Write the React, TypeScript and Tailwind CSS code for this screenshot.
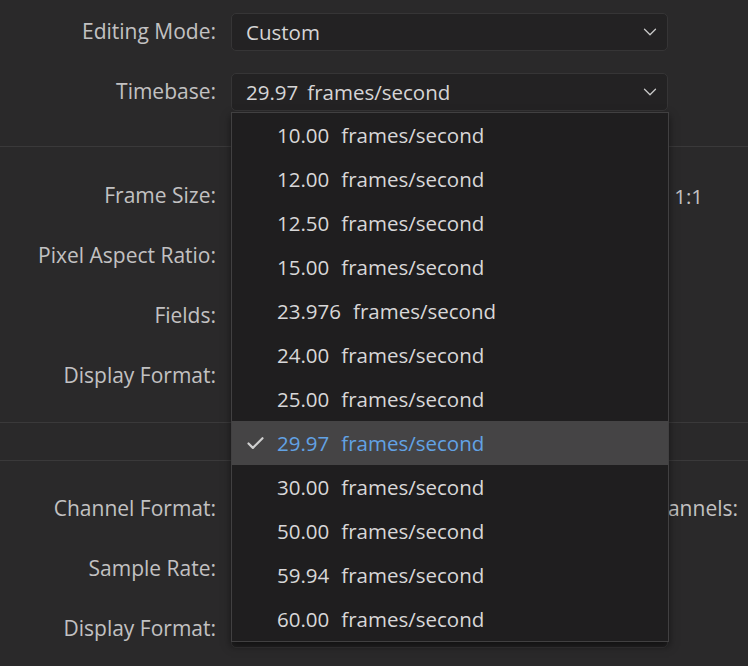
import { Check, ChevronDown } from 'lucide-react';

const rates = ['10.00', '12.00', '12.50', '15.00', '23.976', '24.00', '25.00', '29.97', '30.00', '50.00', '59.94', '60.00'];

function Label({ children }: { children: React.ReactNode }) {
  return <div className="w-[216px] shrink-0 text-right text-[21px] text-[#c2c1c2]">{children}</div>;
}

function SelectBox({ children }: { children?: React.ReactNode }) {
  return (
    <div className="ml-[15px] flex h-[38px] w-[437px] items-center justify-between rounded-[5px] border border-[#363536] bg-[#232223] pl-[14px] pr-[6px] text-[#d6d5d6]">
      <div className="flex items-center">{children}</div>
      <ChevronDown className="h-[22px] w-[22px] text-[#c8c8c8]" strokeWidth={1.4} />
    </div>
  );
}

function Row({ children }: { children: React.ReactNode }) {
  return <div className="flex h-[60px] items-center">{children}</div>;
}

export default function App() {
  return (
    <div
      className="relative h-[666px] w-[748px] overflow-hidden bg-[#2a292a] text-[20.5px]"
      style={{ fontFamily: '"Open Sans", "DejaVu Sans", sans-serif' }}
    >
      {/* sequence settings form */}
      <div className="pt-[2px]">
        <Row>
          <Label>Editing Mode:</Label>
          <SelectBox>Custom</SelectBox>
        </Row>
        <Row>
          <Label>Timebase:</Label>
          <SelectBox>
            <span>29.97</span>
            <span className="ml-[9px]">frames/second</span>
          </SelectBox>
        </Row>
      </div>

      <div className="mt-[24px] h-px bg-[#3a393a]" />

      <div className="pt-[19px]">
        <Row>
          <Label>Frame Size:</Label>
          <div className="ml-auto mr-[45px] text-[#c2c1c2]">1:1</div>
        </Row>
        <Row>
          <Label>Pixel Aspect Ratio:</Label>
        </Row>
        <Row>
          <Label>Fields:</Label>
        </Row>
        <Row>
          <Label>Display Format:</Label>
        </Row>
      </div>

      <div className="mt-[16px] h-px bg-[#3a393a]" />
      <div className="mt-[37px] h-px bg-[#3a393a]" />

      <div className="pt-[18px]">
        <Row>
          <Label>Channel Format:</Label>
          <div className="ml-auto mr-[10px] text-[21px] text-[#c2c1c2]">Channels:</div>
        </Row>
        <Row>
          <Label>Sample Rate:</Label>
        </Row>
        <Row>
          <Label>Display Format:</Label>
          <SelectBox />
        </Row>
      </div>

      {/* open timebase menu */}
      <div className="absolute left-[231px] top-[112px] w-[438px] border border-[#414041] bg-[#1f1e1f] shadow-[0_4px_8px_rgba(0,0,0,0.5)]">
        {rates.map((r) => {
          const sel = r === '29.97';
          return (
            <div
              key={r}
              className={`flex h-[44px] items-center ${sel ? 'bg-[#454445] text-[#62a2e4]' : 'text-[#d8d7d8]'}`}
            >
              <div className="flex w-[45px] justify-center pl-[2px]">
                {sel && <Check className="h-[21px] w-[21px] text-[#cfcfcf]" strokeWidth={2.5} />}
              </div>
              <span>{r}</span>
              <span className="ml-[12px]">frames/second</span>
            </div>
          );
        })}
      </div>
    </div>
  );
}
